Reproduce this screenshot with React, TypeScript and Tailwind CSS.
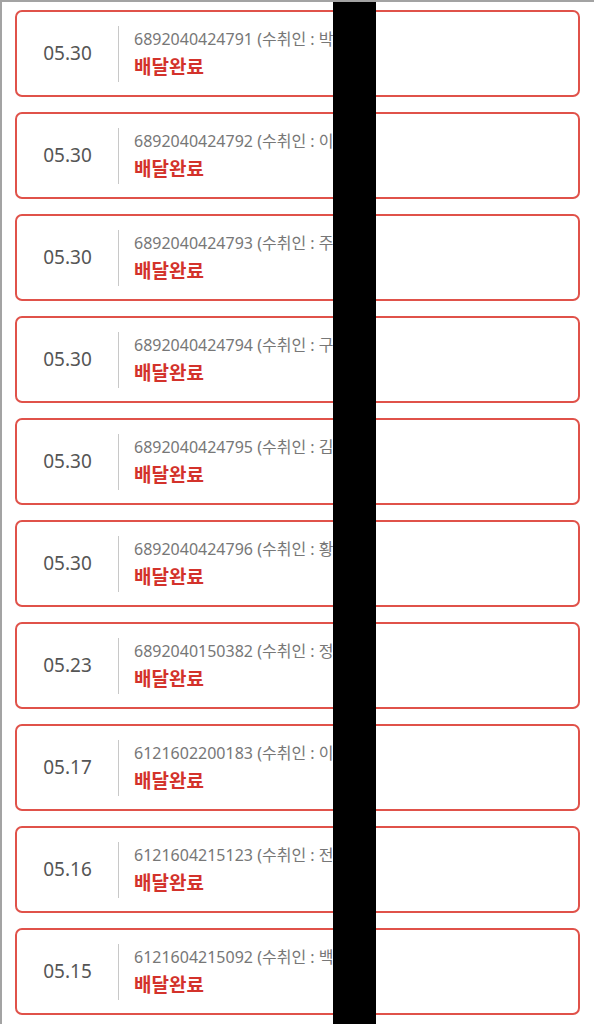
const DELIVERIES = [
  { date: '05.30', invoice: '6892040424791', name: '박' },
  { date: '05.30', invoice: '6892040424792', name: '이' },
  { date: '05.30', invoice: '6892040424793', name: '주' },
  { date: '05.30', invoice: '6892040424794', name: '구' },
  { date: '05.30', invoice: '6892040424795', name: '김' },
  { date: '05.30', invoice: '6892040424796', name: '황' },
  { date: '05.23', invoice: '6892040150382', name: '정' },
  { date: '05.17', invoice: '6121602200183', name: '이' },
  { date: '05.16', invoice: '6121604215123', name: '전' },
  { date: '05.15', invoice: '6121604215092', name: '백' },
];

function DeliveryCard({ date, invoice, name }: { date: string; invoice: string; name: string }) {
  return (
    <div className="flex h-[87px] items-center rounded-[7px] border-2 border-[#e0524a] bg-white">
      <div className="flex w-[101px] shrink-0 justify-center text-[19px] text-[#555]">{date}</div>
      <div className="flex h-[56px] flex-col border-l border-[#c8c8c8] pl-[15px]">
        <span className="whitespace-nowrap text-[16px] leading-[26px] text-[#777]">
          {invoice} (수취인 : {name}
        </span>
        <span className="text-[19px] font-bold leading-[30px] text-[#d3322b]">배달완료</span>
      </div>
    </div>
  );
}

export default function App() {
  return (
    <div
      className="relative min-h-screen overflow-hidden border-t-2 border-l-2 border-[#a3a3a3] bg-white"
      style={{ fontFamily: '"Noto Sans", "Noto Sans CJK KR", sans-serif' }}
    >
      <div className="flex flex-col gap-[15px] pt-[8px] pr-[14px] pl-[13px] pb-[10px]">
        {DELIVERIES.map((d) => (
          <DeliveryCard key={d.invoice} {...d} />
        ))}
      </div>

      {/* redaction bar */}
      <div className="absolute top-0 bottom-0 left-[331px] w-[43px] bg-black" />
    </div>
  );
}
